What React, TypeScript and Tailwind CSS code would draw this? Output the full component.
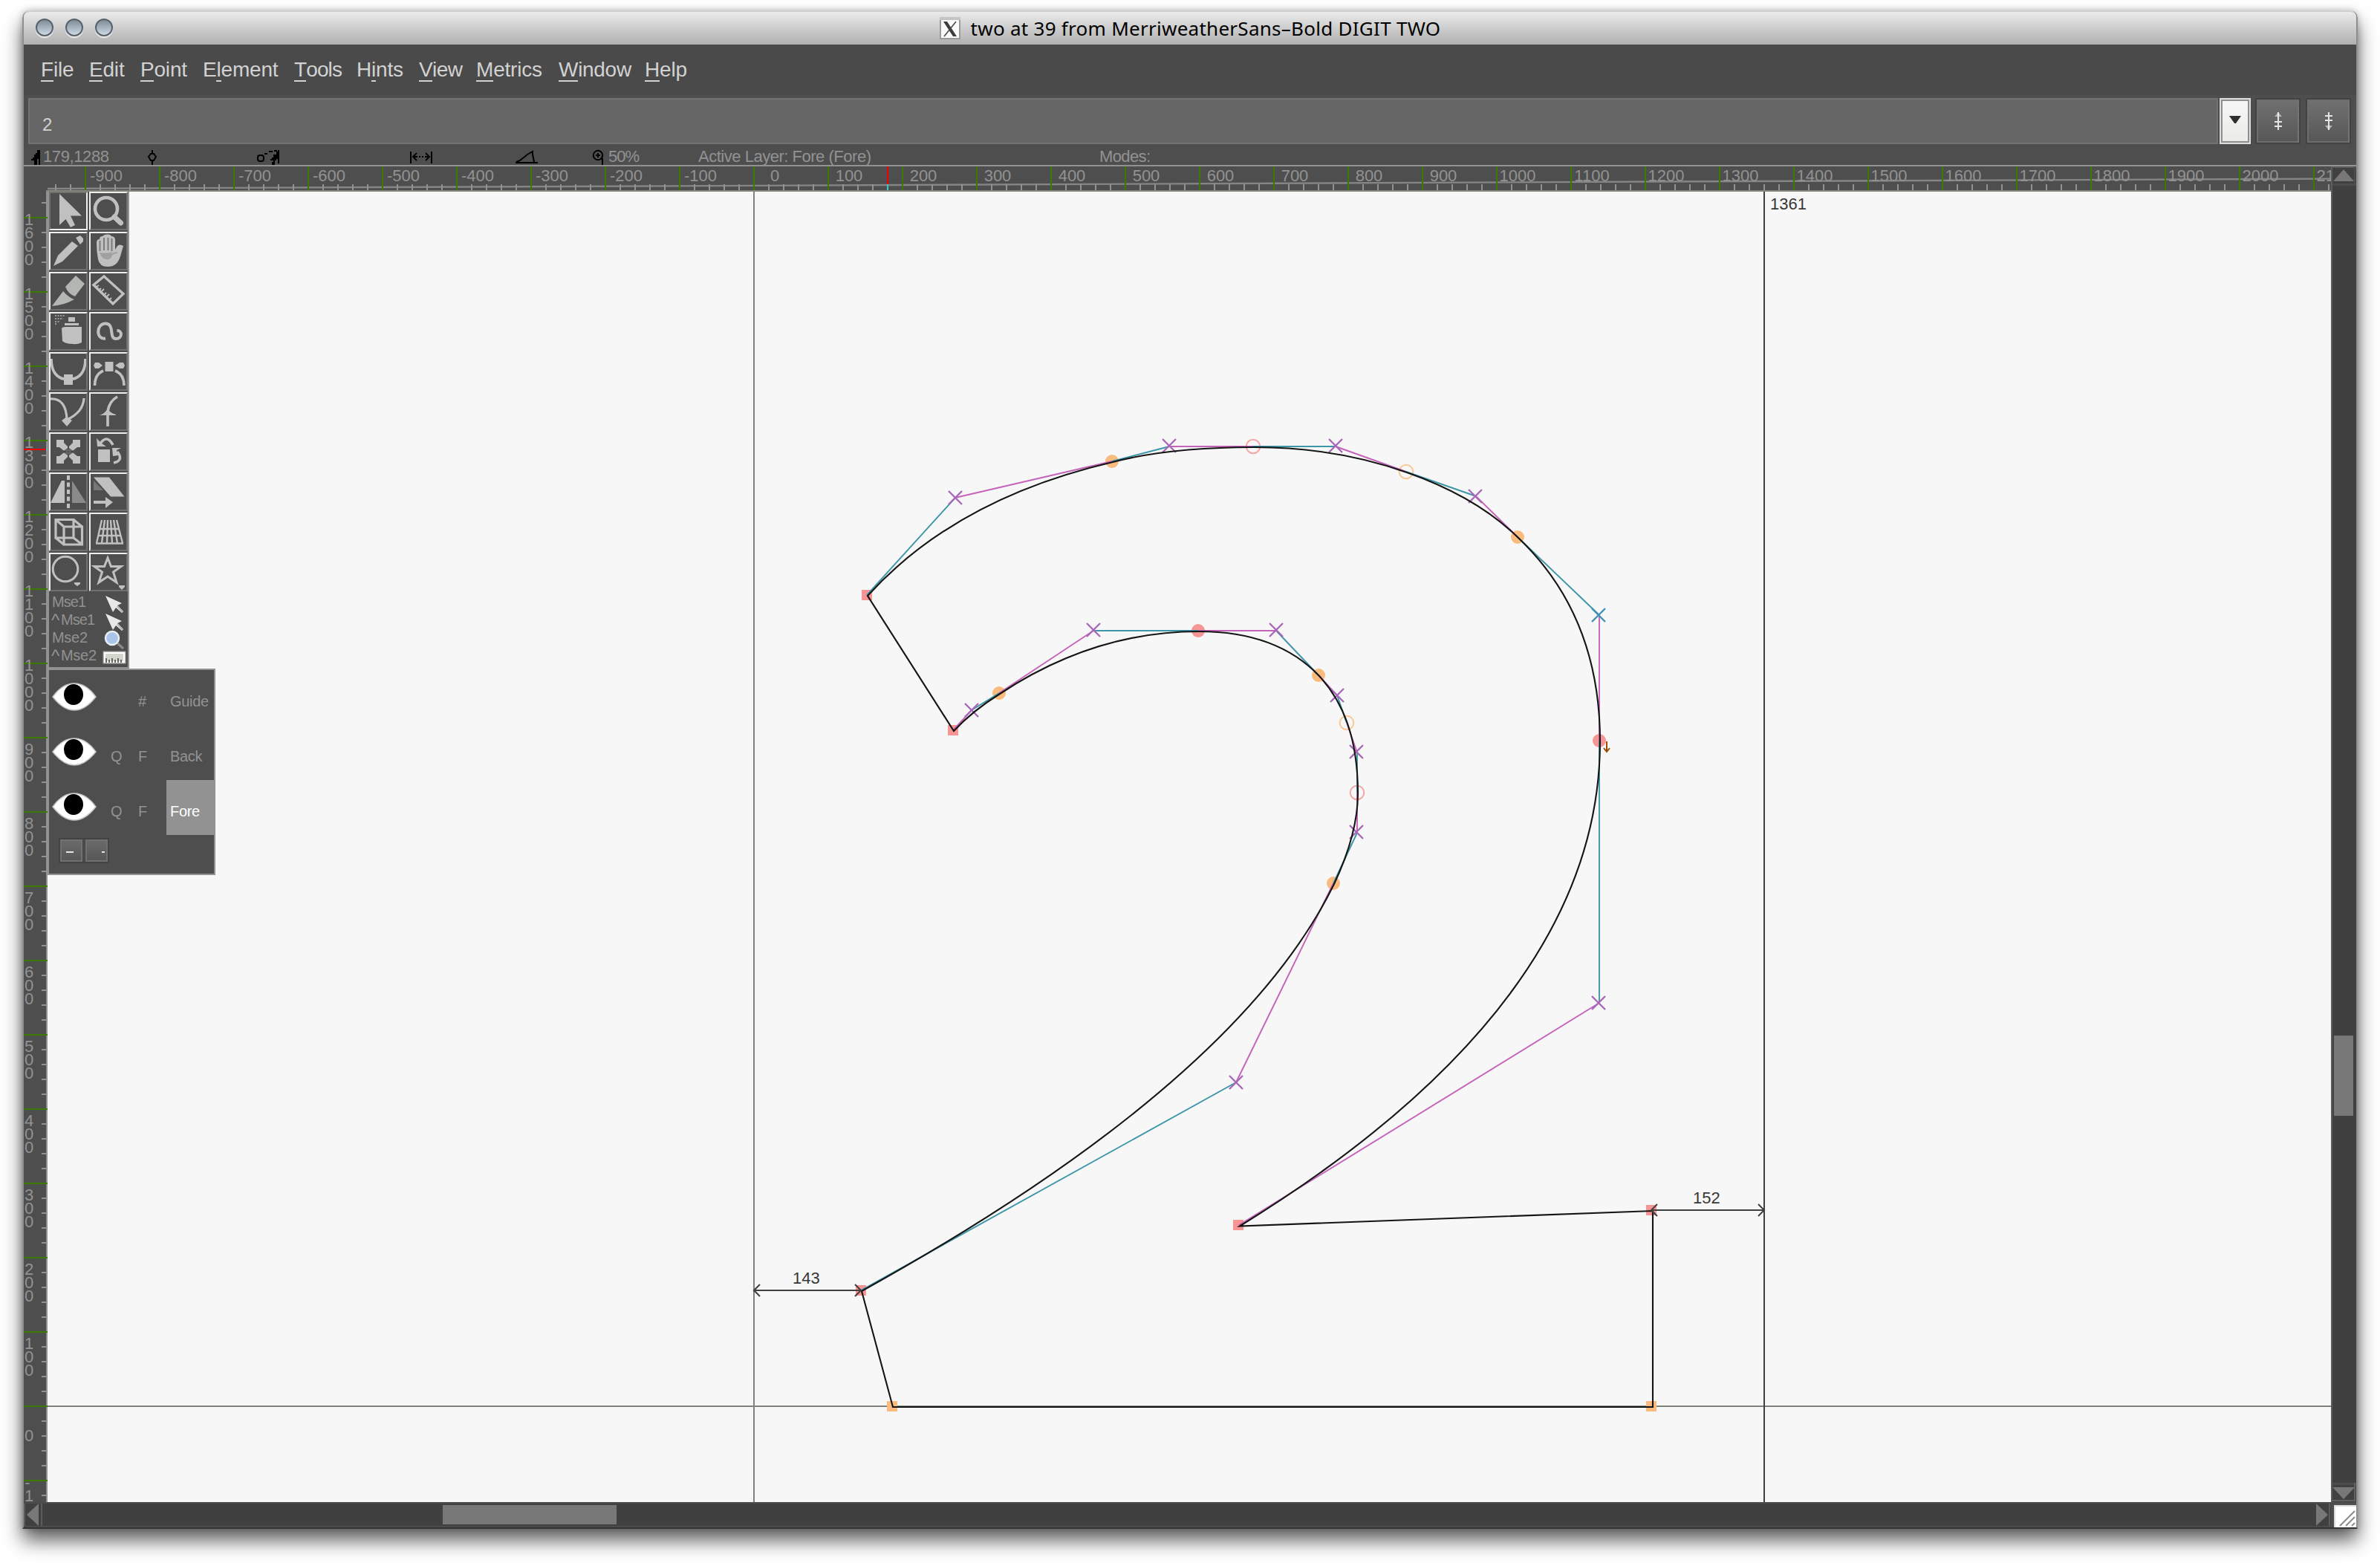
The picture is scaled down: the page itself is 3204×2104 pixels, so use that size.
import React from "react";

type Pt = [number, number];

const SANS = "'Liberation Sans', Arial, sans-serif";
const INK = "#c0c0c0";

const menus: { label: string; key: number; box: string }[] = [
  { label: "File", key: 0, box: "w-[65px] tracking-[-0.2px]" },
  { label: "Edit", key: 0, box: "w-[69px] tracking-[-0.2px]" },
  { label: "Point", key: 0, box: "w-[84px] tracking-[-0.2px]" },
  { label: "Element", key: 1, box: "w-[123px] tracking-[-0.2px]" },
  { label: "Tools", key: 0, box: "w-[84px] tracking-[-0.9px]" },
  { label: "Hints", key: 1, box: "w-[84px] tracking-[-0.2px]" },
  { label: "View", key: 0, box: "w-[77px] tracking-[-0.6px]" },
  { label: "Metrics", key: 0, box: "w-[111px] tracking-[-0.2px]" },
  { label: "Window", key: 0, box: "w-[116px] tracking-[-0.3px]" },
  { label: "Help", key: 0, box: "w-[70px] tracking-[-0.2px]" },
];

function TitleBar() {
  return (
    <div className="relative flex h-[46px] shrink-0 items-center justify-center rounded-t-[9px] border-t-2 border-[#cfcfcf] bg-linear-to-b from-[#ebebeb] to-[#b0b0b0]">
      <div className="absolute left-4 top-[9px] flex gap-4">
        {[0, 1, 2].map((i) => (
          <div
            key={i}
            className="h-6 w-6 rounded-full border-2 border-[#59636d] bg-linear-to-b from-[#7f8d9a] to-[#cfdbe4] shadow-[0_2px_1px_#f0f0f0]"
          />
        ))}
      </div>
      <div className="flex items-center gap-[14px]">
        <svg width="28" height="30" viewBox="0 0 28 30">
          <rect x="1" y="1" width="26" height="28" fill="#fafafa" stroke="#9a9a9a" strokeWidth="2" />
          <rect x="0" y="0" width="28" height="4" fill="#c4c4c4" />
          <path d="M5 6h5l13 20h-5z" fill="#3c3c3c" />
          <path d="M22 6L6 26" stroke="#4a4a4a" strokeWidth="1.6" />
        </svg>
        <span className="whitespace-pre font-['Noto_Sans',sans-serif] text-[26px] leading-8 tracking-[0.27px] text-black">
          two at 39 from MerriweatherSans–Bold DIGIT TWO
        </span>
      </div>
    </div>
  );
}

function MenuBar() {
  return (
    <div className="flex h-[68px] shrink-0 bg-[#4a4a4a] pl-[23px] pt-[18px] text-[28px] leading-8 text-[#d2d2d2]">
      {menus.map((m) => (
        <span key={m.label} className={m.box}>
          {m.label.slice(0, m.key)}
          <span className="inline-block h-[32px] border-b-2 border-[#d2d2d2]">{m.label[m.key]}</span>
          {m.label.slice(m.key + 1)}
        </span>
      ))}
    </div>
  );
}

function StepButton({ flip }: { flip?: boolean }) {
  return (
    <div className="flex h-[62px] w-[61px] items-center justify-center border-2 border-[#434343] bg-[#5a5a5a]">
      <div className="flex h-[58px] w-[57px] items-center justify-center border-2 border-[#6e6e6e] border-r-[#747474] bg-linear-to-b from-[#707070] to-[#575757]">
        <svg width="12" height="24" viewBox="0 0 12 24" className={flip ? "rotate-180" : ""}>
          <path d="M6 0v24M1 13h10M1 19h10" stroke="#e4e4e4" strokeWidth="2" />
          <path d="M6 0L11 6H1z" fill="#b4b4b4" />
          <path d="M6 0v6" stroke="#e8e8e8" strokeWidth="2" />
        </svg>
      </div>
    </div>
  );
}

function EntryRow() {
  return (
    <div className="flex h-[66px] shrink-0 bg-[#4e4e4e] pl-[6px] pt-1">
      <div className="flex h-[62px] w-[2948px] border-2 border-[#727272] bg-[#666666] pl-[17px] pt-[19px] text-[24px] leading-[30px] text-[#d2d2d2]">
        2
      </div>
      <div className="ml-[2px] flex h-[62px] w-[42px] items-center justify-center border-2 border-[#dedede] bg-[#8f8f8f] p-[2px]">
        <div className="flex h-full w-full items-center justify-center bg-linear-to-b from-[#f6f6f6] to-[#ebebe9]">
          <svg width="16" height="10" viewBox="0 0 16 10" className="-mt-1">
            <path d="M0 0h16L9 10H7z" fill="#2f2f2f" />
          </svg>
        </div>
      </div>
      <div className="ml-[6px] flex gap-[7px]">
        <StepButton />
        <StepButton flip />
      </div>
    </div>
  );
}

function InfoRow() {
  return (
    <svg width="3140" height="30" viewBox="32 194 3140 30" className="block shrink-0" fontFamily={SANS} fontSize="22">
      <rect x="32" y="194" width="3140" height="30" fill="#4e4e4e" />
      <g fill="#929292">
        <text x="58" y="218" textLength="89" lengthAdjust="spacing">179,1288</text>
        <text x="819" y="218" textLength="42" lengthAdjust="spacing">50%</text>
        <text x="940" y="218" textLength="233" lengthAdjust="spacing">Active Layer: Fore (Fore)</text>
        <text x="1480" y="218" textLength="69" lengthAdjust="spacing">Modes:</text>
      </g>
      <g fill="#000">
        <path d="M52 202h2v20h-2v-8h-2v8h-4v-6h-4v-2h2v-2h2v-4h2v-2h2v-4h2z" />
        <path d="M374 202h2v18h-2v-6h-2v2h-2v6h-4v-4h2v-2h-4v-2h2v-2h2v-4h4v-4h2z" />
      </g>
      <g fill="none" stroke="#000" strokeWidth="2">
        <path d="M205 202v5M205 216v6M203 207l-3 4 3 5h4l3-5-3-4z" />
        <rect x="347" y="209" width="8" height="8" rx="3" />
        <path d="M356 207h4M362 204h5M369 203h4" />
        <path d="M553 204v16M581 204v16" />
        <path d="M561 206l-5 5 5 5M573 206l5 5-5 5M558 211h4M564 211h2M568 211h2M572 211h4" strokeWidth="1.8" />
        <path d="M694 219h30M695 218l5-2 10-8 7-4v4l2 10" />
        <circle cx="805" cy="209" r="6.2" />
        <path d="M805 206v6M802 209h6M809 214h2v8" />
      </g>
      <rect x="32" y="222" width="3140" height="2" fill="#929292" />
    </svg>
  );
}

const range = (from: number, to: number, step: number) => {
  const out: number[] = [];
  for (let v = from; v <= to; v += step) out.push(v);
  return out;
};

function TopRuler() {
  return (
    <svg width="3106" height="34" viewBox="32 224 3106 34" className="block shrink-0" fontFamily={SANS} fontSize="22">
      <rect x="32" y="224" width="3106" height="34" fill="#4e4e4e" />
      <path d="M64 254L3138 240.6" stroke="#858585" strokeWidth="2.4" />
      {range(-940, 2120, 20).map((u) =>
        u % 100 === 0 ? null : <rect key={u} x={1014 + u} y="248" width="2" height="8" fill="#929292" />
      )}
      {range(-900, 2100, 100).map((u) => (
        <g key={u}>
          <rect x={1014 + u} y="224" width="2" height="32" fill="#3b7a00" />
          <text x={1015 + u + 28} y="244" textAnchor="middle" fill="#929292">
            {u}
          </text>
        </g>
      ))}
      <rect x="1194" y="224" width="2" height="24" fill="#f00000" />
      <rect x="1194" y="248" width="2" height="8" fill="#40c8c8" />
      <rect x="62" y="256" width="3076" height="2" fill="#86867e" />
    </svg>
  );
}

function LeftRuler() {
  return (
    <svg width="32" height="1764" viewBox="32 258 32 1764" className="block shrink-0" fontFamily={SANS} fontSize="22">
      <rect x="32" y="258" width="32" height="1764" fill="#4e4e4e" />
      <rect x="62" y="258" width="2" height="1764" fill="#929292" />
      {range(-120, 1620, 20).map((u) =>
        u % 100 === 0 ? null : <rect key={u} x="56" y={1892 - u} width="6" height="2" fill="#929292" />
      )}
      {range(-100, 1600, 100).map((u) => {
        const tick = 1893 - u;
        const chars = String(u).split("");
        const top = chars.length === 4 ? -6 : chars.length === 3 ? 7 : 31;
        return (
          <g key={u}>
            <rect x="32" y={tick - 1} width="32" height="2" fill="#3b7a00" />
            {chars.map((c, i) => (
              <text key={i} x={c === "-" ? 37 : 39} y={tick + top + 16 + i * 18} textAnchor="middle" fill="#929292">
                {c}
              </text>
            ))}
          </g>
        );
      })}
      <rect x="32" y="604" width="30" height="2" fill="#f00000" />
      <rect x="62" y="604" width="2" height="2" fill="#40c8c8" />
    </svg>
  );
}

const handles: { from: Pt; to: Pt; color: "c" | "m" }[] = [
  { from: [1167, 801], to: [1286, 670], color: "c" },
  { from: [1286, 670], to: [1497, 621], color: "m" },
  { from: [1497, 621], to: [1574, 601], color: "c" },
  { from: [1574, 601], to: [1687, 601], color: "m" },
  { from: [1687, 601], to: [1798, 601], color: "c" },
  { from: [1798, 601], to: [1893, 635], color: "m" },
  { from: [1893, 635], to: [1987, 668], color: "c" },
  { from: [1987, 668], to: [2043, 723], color: "m" },
  { from: [2043, 723], to: [2153, 828], color: "c" },
  { from: [2153, 828], to: [2153, 997], color: "m" },
  { from: [2153, 997], to: [2153, 1350], color: "c" },
  { from: [2153, 1350], to: [1668, 1649], color: "m" },
  { from: [1159, 1737], to: [1664, 1457], color: "c" },
  { from: [1664, 1457], to: [1795, 1189], color: "m" },
  { from: [1795, 1189], to: [1827, 1121], color: "c" },
  { from: [1827, 1121], to: [1827, 1067], color: "m" },
  { from: [1827, 1067], to: [1827, 1013], color: "c" },
  { from: [1827, 1013], to: [1813, 973], color: "m" },
  { from: [1813, 973], to: [1800, 936], color: "c" },
  { from: [1800, 936], to: [1775, 909], color: "m" },
  { from: [1775, 909], to: [1718, 849], color: "c" },
  { from: [1718, 849], to: [1613, 849], color: "m" },
  { from: [1613, 849], to: [1472, 849], color: "c" },
  { from: [1472, 849], to: [1345, 933], color: "m" },
  { from: [1345, 933], to: [1308, 956], color: "c" },
  { from: [1308, 956], to: [1283, 983], color: "m" },
];

const crosses: Pt[] = [
  [1286, 670], [1574, 600], [1798, 600], [1986, 668], [2152, 1350], [1664, 1457],
  [1826, 1120], [1826, 1012], [1800, 936], [1718, 848], [1472, 848], [1308, 956],
];

const outline =
  "M1167 801Q1286 670 1497 621Q1574 601 1687 601Q1798 601 1893 635Q1987 668 2043 723Q2153 828 2153 997" +
  "Q2153 1350 1668 1649.5L2224 1629V1893H1201L1159 1737Q1664 1457 1795 1189Q1827 1121 1827 1067" +
  "Q1827 1013 1813 973Q1800 936 1775 909Q1718 849 1613 849Q1472 849 1345 933Q1308 956 1283 983Z";

function Cross({ at: [x, y], stroke }: { at: Pt; stroke: string }) {
  return <path d={`M${x - 9} ${y - 9}l18 18M${x + 9} ${y - 9}l-18 18`} stroke={stroke} strokeWidth="2.4" />;
}

function GlyphView() {
  return (
    <svg width="3074" height="1764" viewBox="64 258 3074 1764" className="block" fontFamily={SANS} fontSize="22">
      <path d="M64 1893H3138M1015 258V2022" stroke="#82827c" strokeWidth="2" />
      <path d="M2375 258V2022" stroke="#404040" strokeWidth="2" />
      <g fill="#f79494">
        {([[1167, 801], [1283, 983], [1667, 1649], [2223, 1629], [1159, 1737]] as Pt[]).map(([x, y]) => (
          <rect key={`${x}-${y}`} x={x - 7} y={y - 7} width="14" height="14" />
        ))}
        <circle cx="1613" cy="849" r="9" />
        <circle cx="2153" cy="997" r="9" />
      </g>
      <g fill="#fabb7e">
        {([[1201, 1893], [2223, 1893]] as Pt[]).map(([x, y]) => (
          <rect key={`${x}-${y}`} x={x - 7} y={y - 7} width="14" height="14" />
        ))}
        {([[1497, 621], [2043, 723], [1795, 1189], [1775, 909], [1345, 933]] as Pt[]).map(([x, y]) => (
          <circle key={`${x}-${y}`} cx={x} cy={y} r="9" />
        ))}
      </g>
      <g fill="none" strokeWidth="2">
        <circle cx="1687" cy="601" r="9.3" stroke="#f7a6a6" />
        <circle cx="1827" cy="1067" r="9.3" stroke="#f7a6a6" />
        <circle cx="1893" cy="635" r="9.3" stroke="#fac898" />
        <circle cx="1813" cy="973" r="9.3" stroke="#fac898" />
      </g>
      {handles.map((h, i) => (
        <path
          key={i}
          d={`M${h.from[0]} ${h.from[1]}L${h.to[0]} ${h.to[1]}`}
          stroke={h.color === "c" ? "#3c96a8" : "#c562ba"}
          strokeWidth="1.9"
        />
      ))}
      {crosses.map((c) => (
        <Cross key={c.join("-")} at={c} stroke="#a868b8" />
      ))}
      <Cross at={[2152, 828]} stroke="#4090b4" />
      <path d={outline} transform="translate(1 1)" fill="none" stroke="#151515" strokeWidth="2.1" />
      <path d="M2163 998v14M2159 1007l4 5 4-5" stroke="#a04a00" strokeWidth="2" fill="none" />
      <g stroke="#404040" strokeWidth="2" fill="none">
        <path d="M1016 1737H1159M1023 1729l-8 8 8 8M1151 1729l8 8-8 8" />
        <path d="M2223 1629H2375M2231 1621l-8 8 8 8M2367 1621l8 8-8 8" />
      </g>
      <g fill="#383838">
        <text x="1067" y="1728">143</text>
        <text x="2279" y="1620">152</text>
        <text x="2383" y="282">1361</text>
      </g>
    </svg>
  );
}

const S = ({ d, w = 3.6 }: { d: string; w?: number }) => <path d={d} fill="none" stroke={INK} strokeWidth={w} />;

const tools: { id: string; art: React.ReactNode }[] = [
  { id: "pointer", art: <path d="M14 3L44 32.500H29L35 45L29 48L22.500 37L14 45z" fill={INK} /> },
  {
    id: "magnify",
    art: (
      <>
        <circle cx="23" cy="23" r="15" fill="none" stroke={INK} strokeWidth="4.600" />
        <path d="M34 34L42.500 42" stroke={INK} strokeWidth="7" strokeLinecap="round" />
      </>
    ),
  },
  {
    id: "freehand",
    art: (
      <>
        <path d="M6 46L12 32L31 13L39 19L18 40z" fill={INK} />
        <path d="M36 8L42 5L46 9V13L42 17z" fill={INK} />
      </>
    ),
  },
  {
    id: "hand",
    art: (
      <>
        <path
          d="M10 15Q10 10 14 10Q14 6 18 6Q20 3 25 3.500Q29 3 30 6Q34 6 35 10V24L38 19Q41 16 46 19L42 33Q38 47 25 47Q14 47 12 37Q10 27 10 15z"
          fill={INK}
        />
        <path d="M14.500 12V26M20 8V25M25.500 8V25M30.500 9V26" stroke="#757575" strokeWidth="1.800" />
        <path d="M14 28Q24 30 31 27L27 37Q18 39 14 28z" fill="#a0a0a0" />
        <path d="M28 36Q30 28 38 28" fill="none" stroke="#a0a0a0" strokeWidth="2" />
      </>
    ),
  },
  {
    id: "knife",
    art: (
      <g fill="#b3b6b3">
        <path d="M4 46L19 26Q27 35 34 37Q20 45 4 46z" />
        <path d="M22 20L36 5L48 16L35 33Q26 30 22 20z" />
      </g>
    ),
  },
  {
    id: "ruler",
    art: (
      <>
        <S d="M20 6L46 29.500L32 43L6 17.500z" w={3.4} />
        <S d="M10 20l3-2M14 24l2-2M17 26l3-3M21 30l2-2M24 33l3-3M28 37l2-2" w={1.8} />
      </>
    ),
  },
  {
    id: "spray",
    art: (
      <>
        <path d="M8 5h13M8 9h11M8 13h7M8 16h3" stroke="#9a9a9a" strokeWidth="2" strokeDasharray="2 1.500" />
        <rect x="26" y="7" width="9" height="6" fill={INK} />
        <path d="M21 15h19v3H21z" fill={INK} />
        <path d="M17 22Q18 20 22 20H44V41Q38 44 32 43Q22 43 18 39z" fill={INK} />
      </>
    ),
  },
  { id: "spiro", art: <S d="M22 35.500C9 38 9 15.500 22 15.500C35 15.500 26 36 36 36C45 36 45 24.500 37.500 25" w={4} /> },
  {
    id: "curve",
    art: (
      <>
        <S d="M3 9Q3 36 26 37Q49 36 49 9" />
        <rect x="20" y="30" width="12" height="14" fill={INK} />
      </>
    ),
  },
  {
    id: "hvcurve",
    art: (
      <>
        <rect x="21.500" y="13" width="11" height="13" fill={INK} />
        <path d="M8 14h5l5 4-5 4H8L6 18zM46 14h-5l-6 4 6 4h5l2-4z" fill={INK} />
        <S d="M7.500 45Q7.500 30 19 25M47 45Q47 30 35 25" />
      </>
    ),
  },
  {
    id: "corner",
    art: (
      <>
        <S d="M2 9Q23 8 24 37Q46 27 47 8" w={3.2} />
        <path d="M17 38L24 33L31 38L24 46z" fill={INK} />
      </>
    ),
  },
  {
    id: "tangent",
    art: (
      <>
        <S d="M38 6Q27 12 25 26V46" />
        <path d="M14 31Q21 29 25 22Q28 28 36 30V31z" fill={INK} />
      </>
    ),
  },
  {
    id: "scale",
    art: (
      <>
        <path d="M18 24h16M18 28h16M24 18v16M28 18v16" stroke="#6a6a6a" strokeWidth="1.500" />
        <path
          d="M10 10H20V14L25 19V21L21 24H19L14 20H10zM42 10H32V14L27 19V21L31 24H33L38 20H42zM10 42H20V38L25 33V31L21 28H19L14 32H10zM42 42H32V38L27 33V31L31 28H33L38 32H42z"
          fill={INK}
        />
      </>
    ),
  },
  {
    id: "rotate",
    art: (
      <>
        <rect x="12" y="23" width="16" height="17" fill={INK} />
        <S d="M15 15Q24 2 32 17" />
        <path d="M10 8L11 19H23L17 15z" fill={INK} />
        <S d="M38 26Q47 38 33 41" />
        <path d="M31 21H43L37 24L39 31L32 32z" fill={INK} />
      </>
    ),
  },
  {
    id: "flip",
    art: (
      <>
        <path d="M2 41L17 11H21V41z" fill={INK} />
        <path d="M31 11L50 41H31z" fill="#8a8a8a" />
        <path d="M26 4V48" stroke={INK} strokeWidth="4" strokeDasharray="6 3.500" />
      </>
    ),
  },
  {
    id: "skew",
    art: (
      <>
        <path d="M6 11V24H19z" fill="#777" />
        <path d="M6 6.500H27L47.500 32.500H29z" fill={INK} />
        <path d="M6 38H22V33L32 40L22 48V42H6z" fill={INK} />
      </>
    ),
  },
  {
    id: "rotate3d",
    art: <S d="M9 9.500H33V34H9zM20 19H44.500V43H20zM9 9.500L20 19M33 9.500L44.500 19M9 34L20 43M33 34L44.500 43" w={3.2} />,
  },
  {
    id: "perspective",
    art: (
      <>
        <S d="M17 10L10 41M21 10L17 41M25 10L24 41M29 10L31 41M33 10L38 41M37 10L45 41" w={2.4} />
        <S d="M14 22H41M12 31H43M9 41.500H46" w={2.6} />
      </>
    ),
  },
  {
    id: "ellipse",
    art: (
      <>
        <circle cx="22" cy="22" r="16.800" fill="none" stroke={INK} strokeWidth="3" />
        <path d="M34 40h8v2l-4 3-4-3z" fill={INK} />
      </>
    ),
  },
  {
    id: "star",
    art: (
      <>
        <S d="M25 7L29.500 18.500H43L32.500 26L37 40L25 32L13 40L17.500 26L7 18.500H20.500z" w={3} />
        <path d="M40 44h8v2l-4 4-4-4z" fill={INK} />
      </>
    ),
  },
];

function ToolPalette() {
  return (
    <div className="absolute left-0 top-0 h-[642px] w-[110px] border-2 border-t-0 border-[#929292] bg-[#4e4e4e]">
      <div className="grid grid-cols-[52px_52px] gap-[2px]">
        {tools.map((t, i) => (
          <div
            key={t.id}
            className={
              i === 0
                ? "h-[52px] w-[52px] border-2 border-b-[#eeeeee] border-l-[#707070] border-r-[#eeeeee] border-t-[#707070]"
                : "h-[52px] w-[52px] border-2 border-b-[#707070] border-l-[#eeeeee] border-r-[#707070] border-t-[#eeeeee]"
            }
          >
            <svg width="48" height="48" viewBox="2 2 48 48" className="block">
              {t.art}
            </svg>
          </div>
        ))}
      </div>
      <svg width="106" height="102" viewBox="66 796 106 102" className="block" fontFamily={SANS} fontSize="20" fill="#929292">
        <text x="70" y="817" textLength="46">Mse1</text>
        <text x="69" y="843" fontSize="24">^</text>
        <text x="82" y="841" textLength="46">Mse1</text>
        <text x="70" y="865" textLength="48">Mse2</text>
        <text x="69" y="891" fontSize="24">^</text>
        <text x="82" y="889" textLength="48">Mse2</text>
        {[0, 24].map((dy) => (
          <g key={dy} transform={`translate(0 ${dy})`}>
            <path d="M142 802L164 812L158 815L166 823L164 825L156 818L152 824z" fill="#e8e8e8" />
            <path d="M158 816L165 824" stroke="#b8b8b8" strokeWidth="2.500" />
          </g>
        ))}
        <path d="M158 866L166 873" stroke="#8c8c84" strokeWidth="3" />
        <circle cx="151" cy="859" r="9" fill="#a9c6ea" stroke="#e9eef2" strokeWidth="2.500" />
        <rect x="139" y="877" width="30" height="16" fill="#d3d6cc" stroke="#a0a098" strokeWidth="1" />
        <rect x="141" y="879" width="26" height="12" fill="#d3d6cc" stroke="#ffffff" strokeWidth="2" />
        <path d="M143 886v6M147 888v4M151 886v6M155 888v4M159 886v6M163 888v4" stroke="#4c4c44" strokeWidth="1.600" />
      </svg>
    </div>
  );
}

function Eye() {
  return (
    <svg width="60" height="38" viewBox="0 0 60 38">
      <path d="M1 19Q14 1 30 1Q46 1 59 19Q45 37 30 37Q15 37 1 19z" fill="#fff" stroke="#c4c4c4" strokeWidth="1.500" />
      <ellipse cx="29" cy="16" rx="13" ry="14" fill="#000" />
    </svg>
  );
}

const layers = [
  { name: "Guide", q: "", f: "#" },
  { name: "Back", q: "Q", f: "F" },
  { name: "Fore", q: "Q", f: "F" },
];

function LayerPalette() {
  return (
    <div className="absolute left-0 top-[642px] h-[278px] w-[226px] border-2 border-[#929292] bg-[#4e4e4e] text-[20px] leading-6 text-[#929292]">
      {layers.map((l) => (
        <div key={l.name} className="flex h-[74px] pl-1">
          <div className="w-[79px] pt-[17px]">
            <Eye />
          </div>
          <div className="w-[37px] pt-[30px]">{l.q}</div>
          <div className="w-[38px] pt-[30px]">{l.f}</div>
          <div
            className={
              l.name === "Fore"
                ? "flex-1 bg-[#929292] pl-[5px] pt-[30px] tracking-[-0.3px] text-white"
                : "flex-1 pl-[5px] pt-[30px] tracking-[-0.3px]"
            }
          >
            {l.name}
          </div>
        </div>
      ))}
      <div className="ml-[13px] mt-[4px] flex h-[34px] w-[68px] gap-1 border-2 border-[#434343] bg-[#4a4a4a]">
        <div className="flex h-[30px] w-[30px] items-center justify-center border-2 border-[#707070] bg-linear-to-b from-[#6a6a6a] to-[#575757]">
          <div className="mr-1 mt-1 h-[2px] w-[10px] bg-[#e6e6e6]" />
        </div>
        <div className="flex h-[30px] w-[30px] items-center justify-end border-2 border-[#707070] bg-linear-to-b from-[#6a6a6a] to-[#575757] pr-[2px]">
          <div className="mt-1 h-[2px] w-1 bg-[#e6e6e6]" />
        </div>
      </div>
    </div>
  );
}

function VScroll() {
  return (
    <div className="flex w-[34px] shrink-0 flex-col border-l-2 border-[#5c5c5c] bg-[#404040]">
      <svg width="32" height="26" viewBox="0 0 32 26" className="block shrink-0">
        <rect x="0" y="0" width="32" height="26" fill="#404040" />
        <rect x="0" y="0" width="32" height="2" fill="#5c5c5c" />
        <path d="M30 0v24" stroke="#4e4e4e" strokeWidth="2" />
        <path d="M15 4L29 20H1z" fill="#787878" />
        <rect x="0" y="23" width="32" height="3" fill="#4c4c4c" />
      </svg>
      <div className="h-[1144px]" />
      <div className="ml-[2px] h-[108px] w-[26px] bg-[#787878]" />
      <div className="flex-1" />
      <svg width="32" height="26" viewBox="0 0 32 26" className="block shrink-0">
        <rect x="0" y="0" width="32" height="3" fill="#4c4c4c" />
        <path d="M30 0v24H0" stroke="#626262" strokeWidth="2" fill="none" />
        <path d="M0 6H30L15 22z" fill="#787878" />
      </svg>
    </div>
  );
}

function HScroll() {
  return (
    <div className="flex h-[34px] shrink-0 bg-[#404040]">
      <div className="flex w-[3106px] items-center border-y-2 border-[#4c4c4c]">
        <svg width="26" height="30" viewBox="0 0 26 30" className="block">
          <path d="M1 0v30M24 0v30" stroke="#5c5c5c" strokeWidth="2" />
          <path d="M20 0V30L4 15z" fill="#787878" />
        </svg>
        <div className="ml-[538px] h-[26px] w-[234px] bg-[#787878]" />
        <svg width="22" height="30" viewBox="0 0 22 30" className="ml-auto block">
          <path d="M20 0v30" stroke="#5c5c5c" strokeWidth="2" />
          <path d="M2 0V30L18 15z" fill="#787878" />
        </svg>
      </div>
      <div className="flex flex-1 bg-[#4e4e4e] pl-1 pt-1">
        <svg width="30" height="30" viewBox="0 0 30 30" className="block">
          <rect width="30" height="30" fill="#fff" />
          <path d="M1 0v30M0 1h30" stroke="#dcdcdc" strokeWidth="2" />
          <path d="M8 28L28 8M16 28L28 16M24 28L28 24" stroke="#8c8c8c" strokeWidth="2" />
        </svg>
      </div>
    </div>
  );
}

export default function App() {
  return (
    <div className="h-[2104px] w-[3204px] overflow-hidden bg-white pl-[30px] pt-[14px] font-['Liberation_Sans',Arial,sans-serif]">
      <div className="flex h-[2044px] w-[3144px] flex-col rounded-t-[10px] border-x-2 border-b-2 border-x-[#8e8e8e] border-b-[#333333] shadow-[0_16px_26px_rgba(0,0,0,0.62),0_0_10px_rgba(0,0,0,0.22)]">
        <TitleBar />
        <MenuBar />
        <EntryRow />
        <InfoRow />
        <div className="flex h-[1798px] shrink-0">
          <div className="flex w-[3106px] flex-col">
            <TopRuler />
            <div className="flex">
              <LeftRuler />
              <div className="relative h-[1764px] w-[3074px] bg-[#f7f7f7]">
                <GlyphView />
                <ToolPalette />
                <LayerPalette />
              </div>
            </div>
          </div>
          <VScroll />
        </div>
        <HScroll />
      </div>
    </div>
  );
}
